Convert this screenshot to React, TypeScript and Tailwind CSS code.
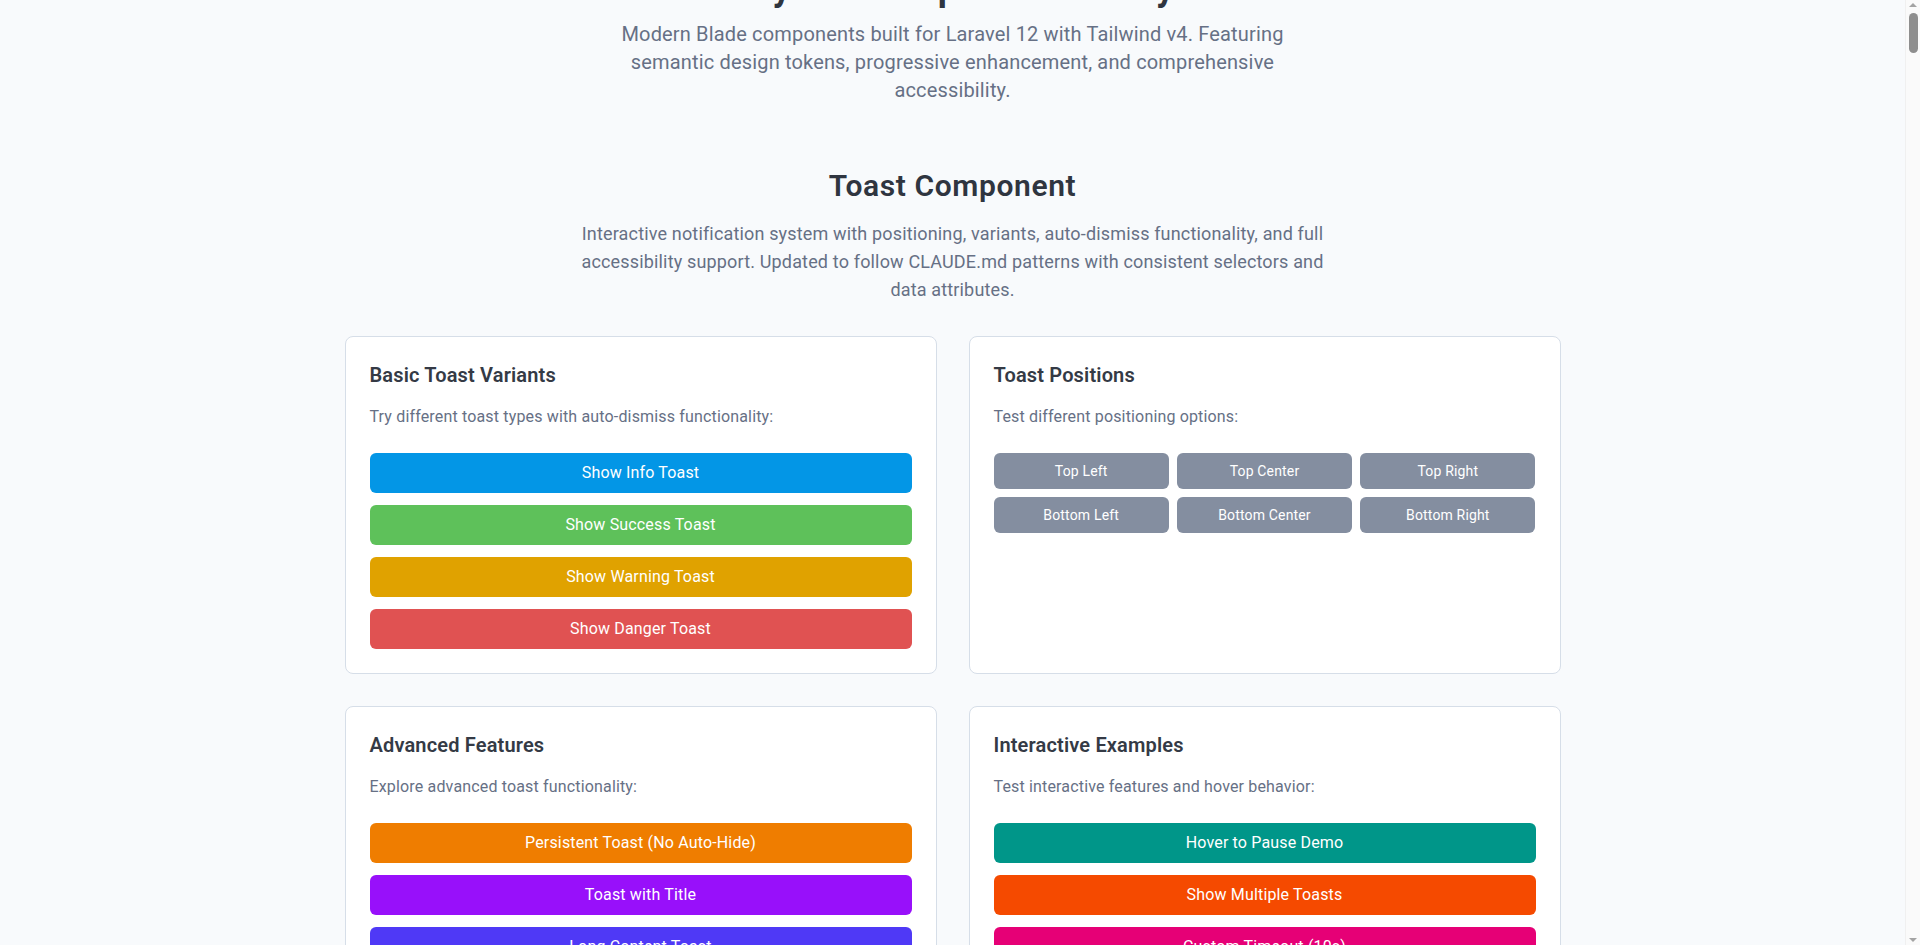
import { useLayoutEffect } from 'react'

type Btn = { label: string; className: string }

const basic: Btn[] = [
  { label: 'Show Info Toast', className: 'bg-[#0396e6]' },
  { label: 'Show Success Toast', className: 'bg-[#5ec15a]' },
  { label: 'Show Warning Toast', className: 'bg-[#e0a200]' },
  { label: 'Show Danger Toast', className: 'bg-[#e05252]' },
]

const positions = ['Top Left', 'Top Center', 'Top Right', 'Bottom Left', 'Bottom Center', 'Bottom Right']

const advanced: Btn[] = [
  { label: 'Persistent Toast (No Auto-Hide)', className: 'bg-[#ef7d00]' },
  { label: 'Toast with Title', className: 'bg-purple-600' },
  { label: 'Long Content Toast', className: 'bg-indigo-600' },
  { label: 'Toast with Actions', className: 'bg-cyan-600' },
]

const interactive: Btn[] = [
  { label: 'Hover to Pause Demo', className: 'bg-teal-600' },
  { label: 'Show Multiple Toasts', className: 'bg-orange-600' },
  { label: 'Custom Timeout (10s)', className: 'bg-pink-600' },
  { label: 'Clear All Toasts', className: 'bg-slate-600' },
]

function Card({ title, text, children }: { title: string; text: string; children: React.ReactNode }) {
  return (
    <div className="bg-white border border-[#d6dee8] rounded-lg p-6">
      <h3 className="text-xl leading-7 font-semibold text-[#343a45] mb-4">{title}</h3>
      <p className="text-base leading-6 text-[#667085] mb-6">{text}</p>
      {children}
    </div>
  )
}

function StackButtons({ items }: { items: Btn[] }) {
  return (
    <div className="flex flex-col gap-3">
      {items.map((b) => (
        <button key={b.label} className={`${b.className} h-10 w-full rounded-md text-white text-base leading-6`}>
          {b.label}
        </button>
      ))}
    </div>
  )
}

// classic page scrollbar seen at the right edge of the shot
function ScrollBar() {
  return (
    <div className="fixed right-0 top-0 h-screen w-[15px] bg-[#fafafa] border-l border-[#f0f0f0]">
      <div className="mx-auto mt-[3px] w-0 h-0 border-x-[4px] border-x-transparent border-b-[4px] border-b-[#a3a3a3]" />
      <div className="mx-auto mt-[6px] w-[9px] h-[40px] rounded-full bg-[#8e8e8e]" />
      <div className="absolute bottom-[3px] left-[3px] w-0 h-0 border-x-[4px] border-x-transparent border-t-[4px] border-t-[#a3a3a3]" />
    </div>
  )
}

export default function App() {
  // the reference shot is taken a little way down the page
  useLayoutEffect(() => {
    window.scrollTo(0, 80)
  }, [])

  return (
    <div className="min-h-screen bg-[#f8fafc] pr-[15px] font-['Roboto','Liberation_Sans',sans-serif] tracking-[0.01em]">
      <main className="max-w-7xl mx-auto px-8 pt-12 pb-24">
        <header className="text-center">
          <h1 className="text-4xl font-bold text-[#2f3540] mb-3">Keys UI Component Library</h1>
          <p className="text-xl leading-7 text-[#667085] max-w-[690px] mx-auto">
            Modern Blade components built for Laravel 12 with Tailwind v4. Featuring semantic design tokens,
            progressive enhancement, and comprehensive accessibility.
          </p>
        </header>

        <section className="mt-16">
          <div className="text-center mb-8">
            <h2 className="text-3xl font-semibold tracking-[0.02em] text-[#2f3540] mb-4">Toast Component</h2>
            <p className="text-lg leading-7 text-[#667085] max-w-3xl mx-auto">
              Interactive notification system with positioning, variants, auto-dismiss functionality, and full
              accessibility support. Updated to follow CLAUDE.md patterns with consistent selectors and data
              attributes.
            </p>
          </div>

          <div className="grid grid-cols-2 gap-8">
            <Card title="Basic Toast Variants" text="Try different toast types with auto-dismiss functionality:">
              <StackButtons items={basic} />
            </Card>

            <Card title="Toast Positions" text="Test different positioning options:">
              <div className="grid grid-cols-3 gap-2">
                {positions.map((p) => (
                  <button key={p} className="h-9 rounded-md bg-[#848ea0] text-white text-sm leading-5">
                    {p}
                  </button>
                ))}
              </div>
            </Card>

            <Card title="Advanced Features" text="Explore advanced toast functionality:">
              <StackButtons items={advanced} />
            </Card>

            <Card title="Interactive Examples" text="Test interactive features and hover behavior:">
              <StackButtons items={interactive} />
            </Card>
          </div>
        </section>
      </main>
      <ScrollBar />
    </div>
  )
}
